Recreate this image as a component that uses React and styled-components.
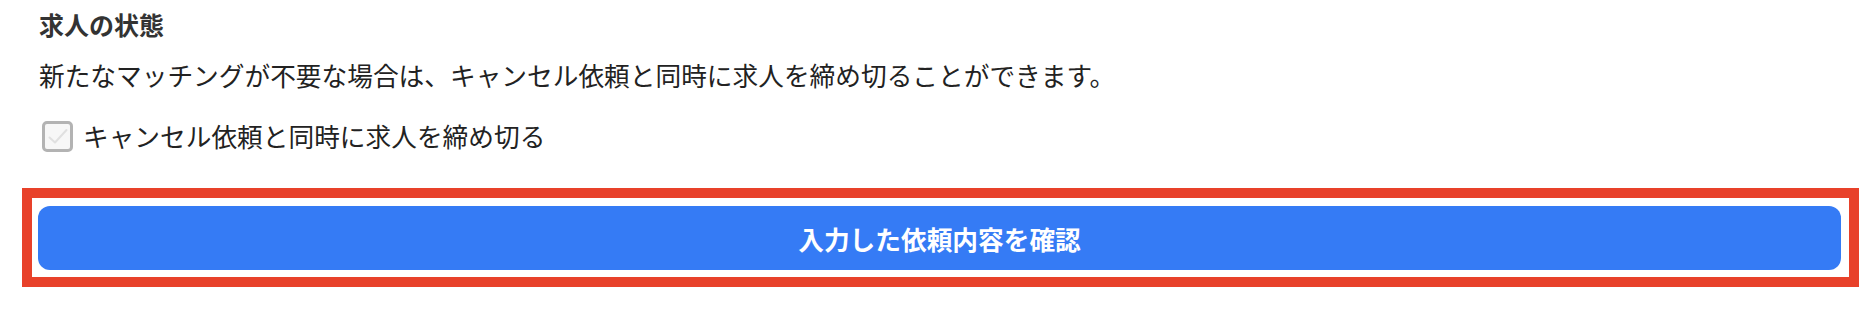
import styled, { createGlobalStyle } from "styled-components";

const GlobalStyle = createGlobalStyle`
    body {
        margin: 0;
        background: #fff;
        font-family: "Noto Sans CJK JP", "Noto Sans", sans-serif;
        color: #222;
    }
`

const CheckIcon = () => (
    <svg width="22" height="22" viewBox="0 0 22 22" fill="none">
        <path d="M2.5 12.5l5.5 5L19.5 5" stroke="#e0e0e0" strokeWidth="2" strokeLinecap="round" strokeLinejoin="round" />
    </svg>
)

const App = () => {
    return (
        <Page>
            <GlobalStyle />
            <Section>
                <Title>求人の状態</Title>
                <Description>新たなマッチングが不要な場合は、キャンセル依頼と同時に求人を締め切ることができます。</Description>
                <CheckRow>
                    <CheckBox><CheckIcon /></CheckBox>
                    <CheckLabel>キャンセル依頼と同時に求人を締め切る</CheckLabel>
                </CheckRow>
            </Section>
            <Highlight>
                <SubmitButton>入力した依頼内容を確認</SubmitButton>
            </Highlight>
        </Page>
    );
}

export default App;

const Page = styled.div`
    width: 100%;
    height: 324px;
    padding: 0 17px 0 22px;
    box-sizing: border-box;
`

const Section = styled.section`
    padding: 6px 0 0 17px;
`

const Title = styled.h2`
    margin: 0;
    font-size: 25px;
    line-height: 36px;
    font-weight: 700;
    color: #333;
`

const Description = styled.p`
    margin: 15px 0 0;
    font-size: 25.7px;
    line-height: 36px;
    color: #222;
`

const CheckRow = styled.label`
    display: flex;
    align-items: center;
    gap: 10px;
    margin-top: 25px;
    padding-left: 3px;
`

const CheckBox = styled.span`
    width: 31px;
    height: 31px;
    box-sizing: border-box;
    border: 3px solid #b3b3b3;
    border-radius: 5px;
    background: #f7f7f7;
    display: flex;
    align-items: center;
    justify-content: center;
`

const CheckLabel = styled.span`
    font-size: 25.7px;
    line-height: 36px;
    color: #222;
`

const Highlight = styled.div`
    margin-top: 34px;
    border: 10px solid #e8412a;
    padding: 8px 8px 7px 6px;
`

const SubmitButton = styled.button`
    display: block;
    width: 100%;
    height: 64px;
    border: none;
    border-radius: 12px;
    background: #357bf5;
    color: #fff;
    font-family: "Noto Sans CJK JP", sans-serif;
    font-size: 25.7px;
    font-weight: 700;
    cursor: pointer;
`
